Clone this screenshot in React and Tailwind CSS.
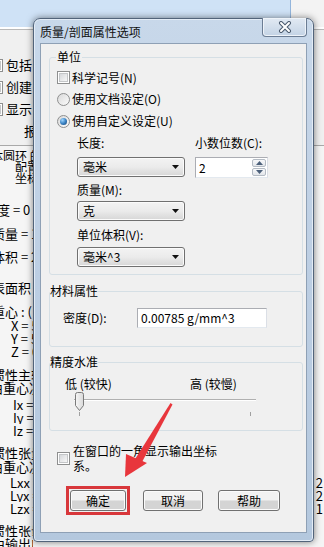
import React from "react";

function Checkbox() {
  return (
    <span className="w-[13px] h-[13px] shrink-0 border border-[#8e8f8f] bg-white p-[1px] inline-block">
      <span className="block w-full h-full border border-[#c4c6c8] bg-linear-to-br from-[#d6d8db] to-[#f7f7f7]" />
    </span>
  );
}

function Radio({ checked }) {
  return (
    <span className="w-[13px] h-[13px] shrink-0 rounded-full border border-[#8e8f8f] bg-linear-to-br from-[#d9d9d9] to-[#fbfbfb] flex items-center justify-center">
      {checked && (
        <span className="w-[7px] h-[7px] rounded-full bg-radial-[at_35%_30%] from-[#9fd6ff] via-[#3b83c4] to-[#123f70]" />
      )}
    </span>
  );
}

function Combo({ value }) {
  return (
    <div className="h-[20px] w-[108px] rounded-[3px] border border-[#707070] bg-linear-to-b from-[#f3f3f3] via-[#ebebeb] to-[#d6d6d6] shadow-[inset_0_0_0_1px_#fbfbfb] flex items-center justify-between pl-[5px] pr-[5px]">
      <span className="leading-[16px]">{value}</span>
      <svg width="7" height="4" viewBox="0 0 7 4">
        <path d="M0 0h7L3.5 4z" fill="#111" />
      </svg>
    </div>
  );
}

function Button({ label, w }) {
  return (
    <button
      className={`${w} h-[21px] rounded-[3px] border border-[#707070] bg-linear-to-b from-[#f2f2f2] from-45% to-[#d4d4d4] to-55% shadow-[inset_0_0_0_1px_#fbfbfb] text-[12px] leading-[16px] text-black`}
    >
      {label}
    </button>
  );
}

const leftRows = [
  { t: "体圆环 的", h: "h-[11px]", c: "-ml-[9px] text-[12px] leading-[11px]" },
  { t: "配置", h: "h-[11px]", c: "pl-[15px] text-[12px] leading-[11px]" },
  { t: "坐标系", h: "h-[31px]", c: "pl-[15px] text-[12px] leading-[11px]" },
  { t: "密度 = 0", h: "h-[24px]", c: "-ml-[16px]" },
  { t: "质量 = 1", h: "h-[23px]", c: "-ml-[8px]" },
  { t: "体积 = 2", h: "h-[31px]", c: "-ml-[8px]" },
  { t: "表面积 =", h: "h-[24px]", c: "-ml-[8px]" },
  { t: "重心 : ( 毫", h: "h-[14px]", c: "-ml-[8px]" },
  { t: "X = 5", h: "h-[13px]", c: "pl-[11px]" },
  { t: "Y = 5", h: "h-[13px]", c: "pl-[11px]" },
  { t: "Z = 0", h: "h-[23px]", c: "pl-[11px]" },
  { t: "惯性主轴", h: "h-[13px]", c: "-ml-[8px]" },
  { t: "由重心决", h: "h-[17px]", c: "-ml-[10px]" },
  { t: "Ix =", h: "h-[13px]", c: "pl-[13px]" },
  { t: "Iy =", h: "h-[13px]", c: "pl-[13px]" },
  { t: "Iz =", h: "h-[22px]", c: "pl-[13px]" },
  { t: "惯性张量", h: "h-[14px]", c: "-ml-[8px]" },
  { t: "由重心决", h: "h-[16px]", c: "-ml-[10px]" },
  { t: "Lxx =", r: "2", h: "h-[13px]", c: "pl-[10px]" },
  { t: "Lyx =", r: "2", h: "h-[13px]", c: "pl-[10px]" },
  { t: "Lzx =", r: "1", h: "h-[22px]", c: "pl-[10px]" },
  { t: "惯性张量", h: "h-[13px]", c: "-ml-[8px]" },
  { t: "由输出座标", h: "h-[13px]", c: "-ml-[8px]" },
];

export default function App() {
  return (
    <div className="relative w-[324px] h-[547px] overflow-hidden bg-[#f0f0f0] font-['Noto_Sans_CJK_SC','Noto_Sans',sans-serif] text-black">
      {/* background window */}
      <div className="flex h-[27px]">
        <div className="w-[291px] bg-[#cfe2f6] border-r border-[#93b5dc]" />
        <div className="flex-1 bg-[#f3f3f3]" />
      </div>
      <div className="h-[2px] bg-white" />
      <div className="border-t border-[#b9b9b9] pt-[24px] pb-[3px] text-[13px] leading-[22px]">
        {["包括", "创建", "显示"].map((t) => (
          <div key={t} className="h-[22px] w-[33px] overflow-hidden">
            <div className="flex items-center gap-[3px] -ml-[10px] h-full whitespace-nowrap">
              <Checkbox />
              <span>{t}</span>
            </div>
          </div>
        ))}
        <div className="h-[22px] w-[33px] overflow-hidden pl-[24px] whitespace-nowrap">报</div>
      </div>
      <div className="border-t border-[#a9a9a9] bg-[#f5f5f5] pt-[4px] text-[13px] leading-[13px]">
        {leftRows.map((l, i) => (
          <div key={i} className={`${l.h} flex justify-between`}>
            <div className="w-[33px] overflow-hidden">
              <div className={`${l.c} whitespace-nowrap`}>{l.t}</div>
            </div>
            {l.r && <span className="pr-[1px]">{l.r}</span>}
          </div>
        ))}
      </div>

      {/* dialog window */}
      <div className="absolute left-[33px] top-[18px] w-[281px] h-[524px] rounded-t-[7px] rounded-b-[4px] border border-[#52647a] bg-linear-to-b from-[#c8d8ea] via-[#bccee3] to-[#b4c8de] shadow-[0_0_7px_rgba(0,0,0,0.5),inset_0_0_0_1px_#e3ecf6] flex flex-col">
        <div className="relative h-[24px] flex items-center pl-[6px] pt-[2px] text-[12px] text-[#111]">
          <span className="leading-[16px]">质量/剖面属性选项</span>
          <div className="absolute right-[6px] top-[-1px] w-[45px] h-[19px] rounded-b-[4px] border border-t-0 border-[#6b7d94] bg-linear-to-b from-[#e2eaf3] to-[#c3d3e5] shadow-[inset_0_0_0_1px_#eef3f9] flex items-center justify-center">
            <svg width="14" height="12" viewBox="0 0 14 12">
              <path d="M3 2l8 8M11 2l-8 8" stroke="#4a5a6e" strokeWidth="4" strokeLinecap="round" />
              <path d="M3 2l8 8M11 2l-8 8" stroke="#ffffff" strokeWidth="2" strokeLinecap="round" />
            </svg>
          </div>
        </div>

        <div className="mx-[6px] h-[490px] bg-[#f0f0f0] border border-[#8ea0b5] flex flex-col pl-[8px] pr-[3px] pt-[5px] text-[12px] leading-[16px]">
          {/* 单位 */}
          <fieldset className="border border-[#d5dfe5] rounded-[3px] min-w-0">
            <legend className="ml-[6px] px-[1px] leading-[16px]">单位</legend>
            <div className="pl-[7px] pt-[2px]">
              <div className="h-[21px] flex items-center gap-[2px]">
                <Checkbox />
                <span>科学记号(N)</span>
              </div>
              <div className="h-[22px] flex items-center gap-[2px]">
                <Radio />
                <span>使用文档设定(O)</span>
              </div>
              <div className="h-[22px] flex items-center gap-[2px]">
                <Radio checked />
                <span>使用自定义设定(U)</span>
              </div>
            </div>
            <div className="flex gap-[10px] pl-[27px] pt-[4px] pb-[7px]">
              <div className="w-[108px] flex flex-col">
                <div className="h-[14px] leading-[14px]">长度:</div>
                <div className="mt-[7px]">
                  <Combo value="毫米" />
                </div>
                <div className="h-[14px] leading-[14px] mt-[6px]">质量(M):</div>
                <div className="mt-[4px]">
                  <Combo value="克" />
                </div>
                <div className="h-[14px] leading-[14px] mt-[7px]">单位体积(V):</div>
                <div className="mt-[5px]">
                  <Combo value="毫米^3" />
                </div>
              </div>
              <div className="w-[73px] flex flex-col">
                <div className="h-[14px] leading-[14px] whitespace-nowrap">小数位数(C):</div>
                <div className="mt-[7px] h-[21px] flex border border-[#abadb3] border-b-[#e3e9ef] border-r-[#dbdfe6] bg-white">
                  <span className="flex-1 pl-[3px] leading-[19px]">2</span>
                  <div className="w-[16px] flex flex-col gap-px p-px">
                    <div className="flex-1 rounded-[2px] border border-[#b4bbc4] bg-linear-to-b from-[#f7f8fa] to-[#e3e6ea] flex items-center justify-center">
                      <svg width="7" height="4" viewBox="0 0 7 4">
                        <path d="M0 4h7L3.5 0z" fill="#4c607a" />
                      </svg>
                    </div>
                    <div className="flex-1 rounded-[2px] border border-[#b4bbc4] bg-linear-to-b from-[#f7f8fa] to-[#e3e6ea] flex items-center justify-center">
                      <svg width="7" height="4" viewBox="0 0 7 4">
                        <path d="M0 0h7L3.5 4z" fill="#4c607a" />
                      </svg>
                    </div>
                  </div>
                </div>
              </div>
            </div>
          </fieldset>

          {/* 材料属性 */}
          <fieldset className="mt-[8px] border border-[#d5dfe5] rounded-[3px] min-w-0">
            <legend className="leading-[16px]">材料属性</legend>
            <div className="flex items-center pl-[13px] pt-[9px] pb-[18px]">
              <span className="w-[74px]">密度(D):</span>
              <div className="w-[130px] h-[20px] border border-[#abadb3] border-b-[#e3e9ef] border-r-[#dbdfe6] bg-white pl-[3px] leading-[18px]">
                0.00785 g/mm^3
              </div>
            </div>
          </fieldset>

          {/* 精度水准 */}
          <fieldset className="mt-[7px] border border-[#d5dfe5] rounded-[3px] min-w-0">
            <legend className="leading-[16px]">精度水准</legend>
            <div className="pt-[7px] pb-[14px]">
              <div className="flex h-[14px] leading-[14px] pl-[15px]">
                <span className="w-[125px]">低 (较快)</span>
                <span>高 (较慢)</span>
              </div>
              <div className="relative ml-[24px] mt-[1px] w-[182px] h-[24px]">
                <div className="absolute left-0 right-0 top-[7px] h-[2px] border-t border-[#b0b0b0] border-b border-b-white" />
                <div className="absolute left-[5px] top-[20px] w-px h-[4px] bg-[#a0a0a0]" />
                <div className="absolute left-[176px] top-[20px] w-px h-[4px] bg-[#a0a0a0]" />
                <svg className="absolute left-0 top-0" width="11" height="20" viewBox="0 0 11 20">
                  <defs>
                    <linearGradient id="th" x1="0" y1="0" x2="1" y2="0">
                      <stop offset="0" stopColor="#f6f6f6" />
                      <stop offset="1" stopColor="#d9d9d9" />
                    </linearGradient>
                  </defs>
                  <path d="M1.5 2.5a2 2 0 0 1 2-2h4a2 2 0 0 1 2 2v11l-4 5l-4-5z" fill="url(#th)" stroke="#7a7a7a" />
                </svg>
              </div>
            </div>
          </fieldset>

          {/* 坐标系 */}
          <div className="mt-[12px] pl-[8px] flex items-center gap-[3px]">
            <Checkbox />
            <span className="w-[148px] leading-[15px]">在窗口的一角显示输出坐标系。</span>
          </div>

          {/* buttons */}
          <div className="mt-[13px] pl-[17px] flex items-center">
            <div className="border-[3px] border-[#d8373b] p-px">
              <Button label="确定" w="w-[56px]" />
            </div>
            <div className="ml-[13px]">
              <Button label="取消" w="w-[60px]" />
            </div>
            <div className="ml-[15px]">
              <Button label="帮助" w="w-[62px]" />
            </div>
          </div>
        </div>
      </div>

      {/* red annotation arrow */}
      <svg className="absolute left-0 top-0 pointer-events-none" width="324" height="547" viewBox="0 0 324 547">
        <path d="M170.5 403L172.5 404.5L141 464L134.5 460z" fill="#e8363c" />
        <path d="M125 477L126 454L147 463z" fill="#e8363c" />
      </svg>
    </div>
  );
}
